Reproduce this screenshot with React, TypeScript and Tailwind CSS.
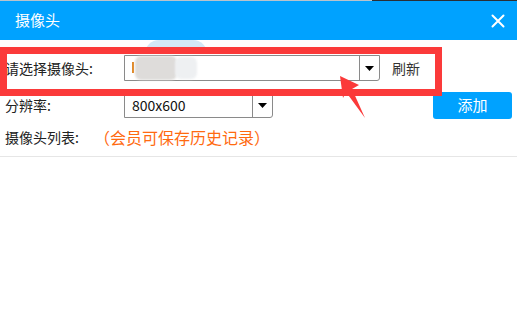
import React from 'react';

const font = { fontFamily: '"Microsoft YaHei", "Noto Sans CJK SC", "Noto Sans", sans-serif' };

const Caret = () => (
  <svg width="9" height="5" viewBox="0 0 9 5">
    <polygon points="0,0 9,0 4.5,5" fill="#000" />
  </svg>
);

const Select = ({ width, value, children }: { width: string; value?: string; children?: React.ReactNode }) => (
  <div className={`relative flex h-[26px] ${width} items-stretch rounded-br-[3px] border border-[#8a8a8a] bg-white`}>
    <div className="relative flex flex-1 items-center pl-[7px] text-[14px] text-[#111]">
      {value}
      {children}
    </div>
    <div className="flex w-[20px] items-center justify-center border-l border-[#8a8a8a]">
      <Caret />
    </div>
  </div>
);

const App = () => {
  return (
    <div className="relative h-[310px] w-[517px] overflow-hidden bg-white" style={font}>
      {/* title bar */}
      <div className="flex h-[1px] w-full">
        <div className="w-[372px] bg-[#b9c3cc]" />
        <div className="flex-1 bg-[#2a2f36]" />
      </div>
      <div className="flex h-[39px] items-center justify-between bg-[#00a2ff] pl-[15px] pr-[12px]">
        <span className="text-[15px] text-white">摄像头</span>
        <svg width="14" height="14" viewBox="0 0 14 14">
          <path d="M1.5 1.5 L12.5 12.5 M12.5 1.5 L1.5 12.5" stroke="#fff" strokeWidth="2" strokeLinecap="round" />
        </svg>
      </div>

      {/* body */}
      <div className="pt-[15px]">
        <div className="flex h-[26px] items-center">
          <div className="w-[124px] pl-[5px] text-[14px] text-[#222]">请选择摄像头:</div>
          <Select width="w-[256px]">
            <span className="absolute left-[7px] top-[6px] h-[11px] w-[2px] bg-[#e08a2a]" />
            <span className="absolute left-[10px] top-[0px] h-[24px] w-[42px] rounded-[6px] bg-[#dedcda] blur-[1px]" />
            <span className="absolute left-[50px] top-[1px] h-[22px] w-[22px] rounded-[6px] bg-[#eef0f2] blur-[1px]" />
          </Select>
          <span className="ml-[12px] text-[14px] text-[#333]">刷新</span>
        </div>

        <div className="mt-[11px] flex h-[26px] items-center pr-[5px]">
          <div className="w-[124px] pl-[5px] text-[14px] text-[#222]">分辨率:</div>
          <Select width="w-[149px]" value="800x600" />
          <button className="ml-auto flex h-[27px] w-[79px] items-center justify-center rounded-[3px] bg-[#00a2ff] text-[15px] text-white">
            添加
          </button>
        </div>

        <div className="mt-[8px] flex h-[22px] items-center">
          <div className="w-[94px] pl-[5px] text-[14px] text-[#222]">摄像头列表:</div>
          <span className="text-[16px] text-[#ff6a10]">（会员可保存历史记录）</span>
        </div>

        <div className="mt-[8px] border-t border-[#e6e6e6]" />
      </div>

      {/* blurred blob over title edge */}
      <div className="absolute left-[145px] top-[40px] h-[14px] w-[62px] rounded-t-[20px] bg-[#d4e8f6]" />

      {/* red annotation box */}
      <div className="pointer-events-none absolute left-0 top-[47px] h-[49px] w-[442px] border-[7px] border-[#fb3a3a]" />

      {/* red arrow */}
      <svg className="pointer-events-none absolute left-0 top-0" width="517" height="310">
        <polygon points="340,76 359,85 352,89 365,118 346,92 343,98" fill="#fb3a3a" />
      </svg>
    </div>
  );
};

export default App;
